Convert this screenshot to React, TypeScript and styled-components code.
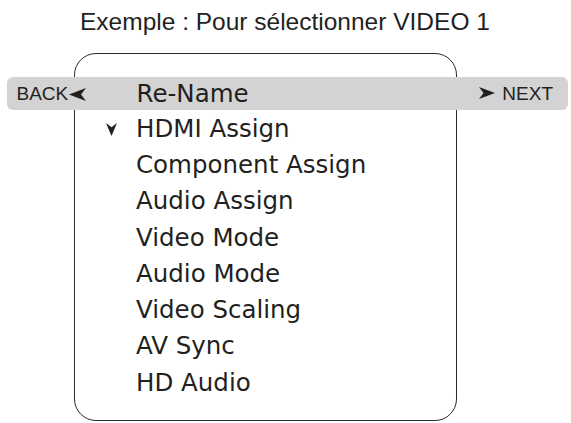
import React, { FunctionComponent } from "react"
import styled, { createGlobalStyle } from "styled-components"

const GlobalStyle = createGlobalStyle`
  html, body {
    margin: 0;
    padding: 0;
    background: #ffffff;
  }
  body {
    width: 571px;
    height: 423px;
    overflow: hidden;
    font-family: "Liberation Sans", Arial, sans-serif;
    color: #231f20;
  }
`

const items = [
  "HDMI Assign",
  "Component Assign",
  "Audio Assign",
  "Video Mode",
  "Audio Mode",
  "Video Scaling",
  "AV Sync",
  "HD Audio",
]

const ArrowHead: FunctionComponent<{ dir: "left" | "right" | "down" }> = ({
  dir,
}) => {
  if (dir === "down") {
    return (
      <CheckSvg viewBox="0 0 11 13" width="11" height="13">
        <path d="M0 0 L5.5 4.2 L11 0 L5.5 13 Z" fill="#231f20" />
      </CheckSvg>
    )
  }
  if (dir === "left") {
    return (
      <BackSvg viewBox="0 0 17 13" width="17" height="13">
        <path d="M0 6.5 L17 0 L12 6.5 L17 13 Z" fill="#231f20" />
      </BackSvg>
    )
  }
  return (
    <NextSvg viewBox="0 0 16 12" width="16" height="12">
      <path d="M16 6 L0 0 L4.5 6 L0 12 Z" fill="#231f20" />
    </NextSvg>
  )
}

export default function App() {
  return (
    <>
      <GlobalStyle />
      <Page>
        <Caption>Exemple : Pour sélectionner VIDEO 1</Caption>
        <Frame>
          <HighlightBar>
            <BackNav>
              BACK
              <ArrowHead dir="left" />
            </BackNav>
            <MenuText>Re-Name</MenuText>
            <NextNav>
              <ArrowHead dir="right" />
              NEXT
            </NextNav>
          </HighlightBar>
          <MenuList>
            {items.map((label, i) => (
              <MenuRow key={label}>
                <Marker>{i === 0 && <ArrowHead dir="down" />}</Marker>
                <MenuText>{label}</MenuText>
              </MenuRow>
            ))}
          </MenuList>
        </Frame>
      </Page>
    </>
  )
}

const Page = styled.div`
  display: flex;
  flex-direction: column;
  padding-top: 8px;
`

const Caption = styled.div`
  padding-left: 80px;
  font-family: "Liberation Sans", Arial, sans-serif;
  font-size: 24.5px;
  line-height: 28px;
  color: #231f20;
  white-space: nowrap;
`

const Frame = styled.div`
  box-sizing: border-box;
  margin: 17px 0 0 74px;
  width: 383px;
  height: 368px;
  border: 1.5px solid #2b2b2b;
  border-radius: 22px;
  padding-top: 23px;
`

const HighlightBar = styled.div`
  display: flex;
  align-items: center;
  height: 33px;
  margin: 0 -112px 0 -68.5px;
  background: #d3d3d4;
  border-radius: 6px;
`

const BackNav = styled.div`
  box-sizing: border-box;
  display: flex;
  align-items: center;
  width: 130px;
  padding-left: 10px;
  font-family: "Liberation Sans", Arial, sans-serif;
  font-size: 19px;
  color: #231f20;
`

const NextNav = styled.div`
  display: flex;
  align-items: center;
  margin-left: auto;
  padding-right: 15px;
  font-family: "Liberation Sans", Arial, sans-serif;
  font-size: 19px;
  color: #231f20;
`

const BackSvg = styled.svg`
  margin-left: 1px;
  margin-top: 1px;
`

const NextSvg = styled.svg`
  margin-right: 7px;
  margin-top: -1px;
`

const CheckSvg = styled.svg`
  display: block;
`

const MenuList = styled.div`
  display: flex;
  flex-direction: column;
`

const MenuRow = styled.div`
  display: grid;
  grid-template-columns: 61px 1fr;
  align-items: center;
  height: 36.3px;
`

const Marker = styled.div`
  display: flex;
  justify-content: flex-start;
  padding-left: 31px;
  padding-top: 3px;
`

const MenuText = styled.div`
  font-family: "DejaVu Sans", Verdana, sans-serif;
  font-size: 24.5px;
  line-height: 33px;
  color: #231f20;
  white-space: nowrap;
`
